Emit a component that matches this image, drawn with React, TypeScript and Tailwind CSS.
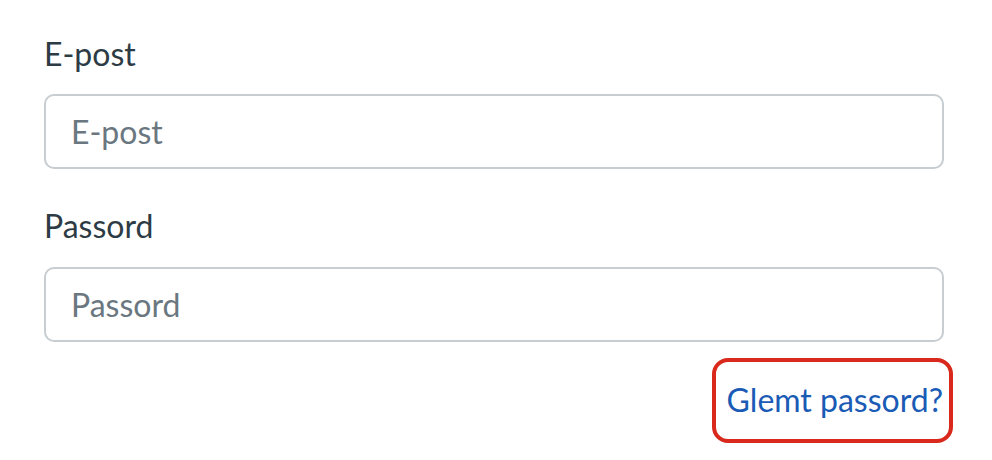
import React from "react"

export default function App() {
  return (
    <div className="min-h-screen bg-white pl-[44px] pt-[34px]" style={{ fontFamily: "Lato, 'Noto Sans', sans-serif" }}>
      <form className="w-[900px]">
        <label className="block text-[32px] leading-[40px] text-[#2d3b45]">E-post</label>
        <input
          type="email"
          placeholder="E-post"
          className="mt-[20px] block h-[75px] w-full rounded-[10px] border-2 border-[#c7cdd1] px-[25px] text-[32px] text-[#2d3b45] placeholder:text-[#6b7780] outline-none"
        />
        <label className="mt-[37px] block text-[32px] leading-[40px] text-[#2d3b45]">Passord</label>
        <input
          type="password"
          placeholder="Passord"
          className="mt-[21px] block h-[75px] w-full rounded-[10px] border-2 border-[#c7cdd1] px-[25px] text-[32px] text-[#2d3b45] placeholder:text-[#6b7780] outline-none"
        />
        <div className="mt-[16px] flex justify-end">
          <a
            href="#"
            className="-mr-[9px] inline-block rounded-[16px] border-4 border-[#d9291c] pl-[11px] pr-[6px] pt-[18px] pb-[19px] text-[32px] leading-[40px] text-[#1a5bb5]"
          >
            Glemt passord?
          </a>
        </div>
      </form>
    </div>
  )
}
